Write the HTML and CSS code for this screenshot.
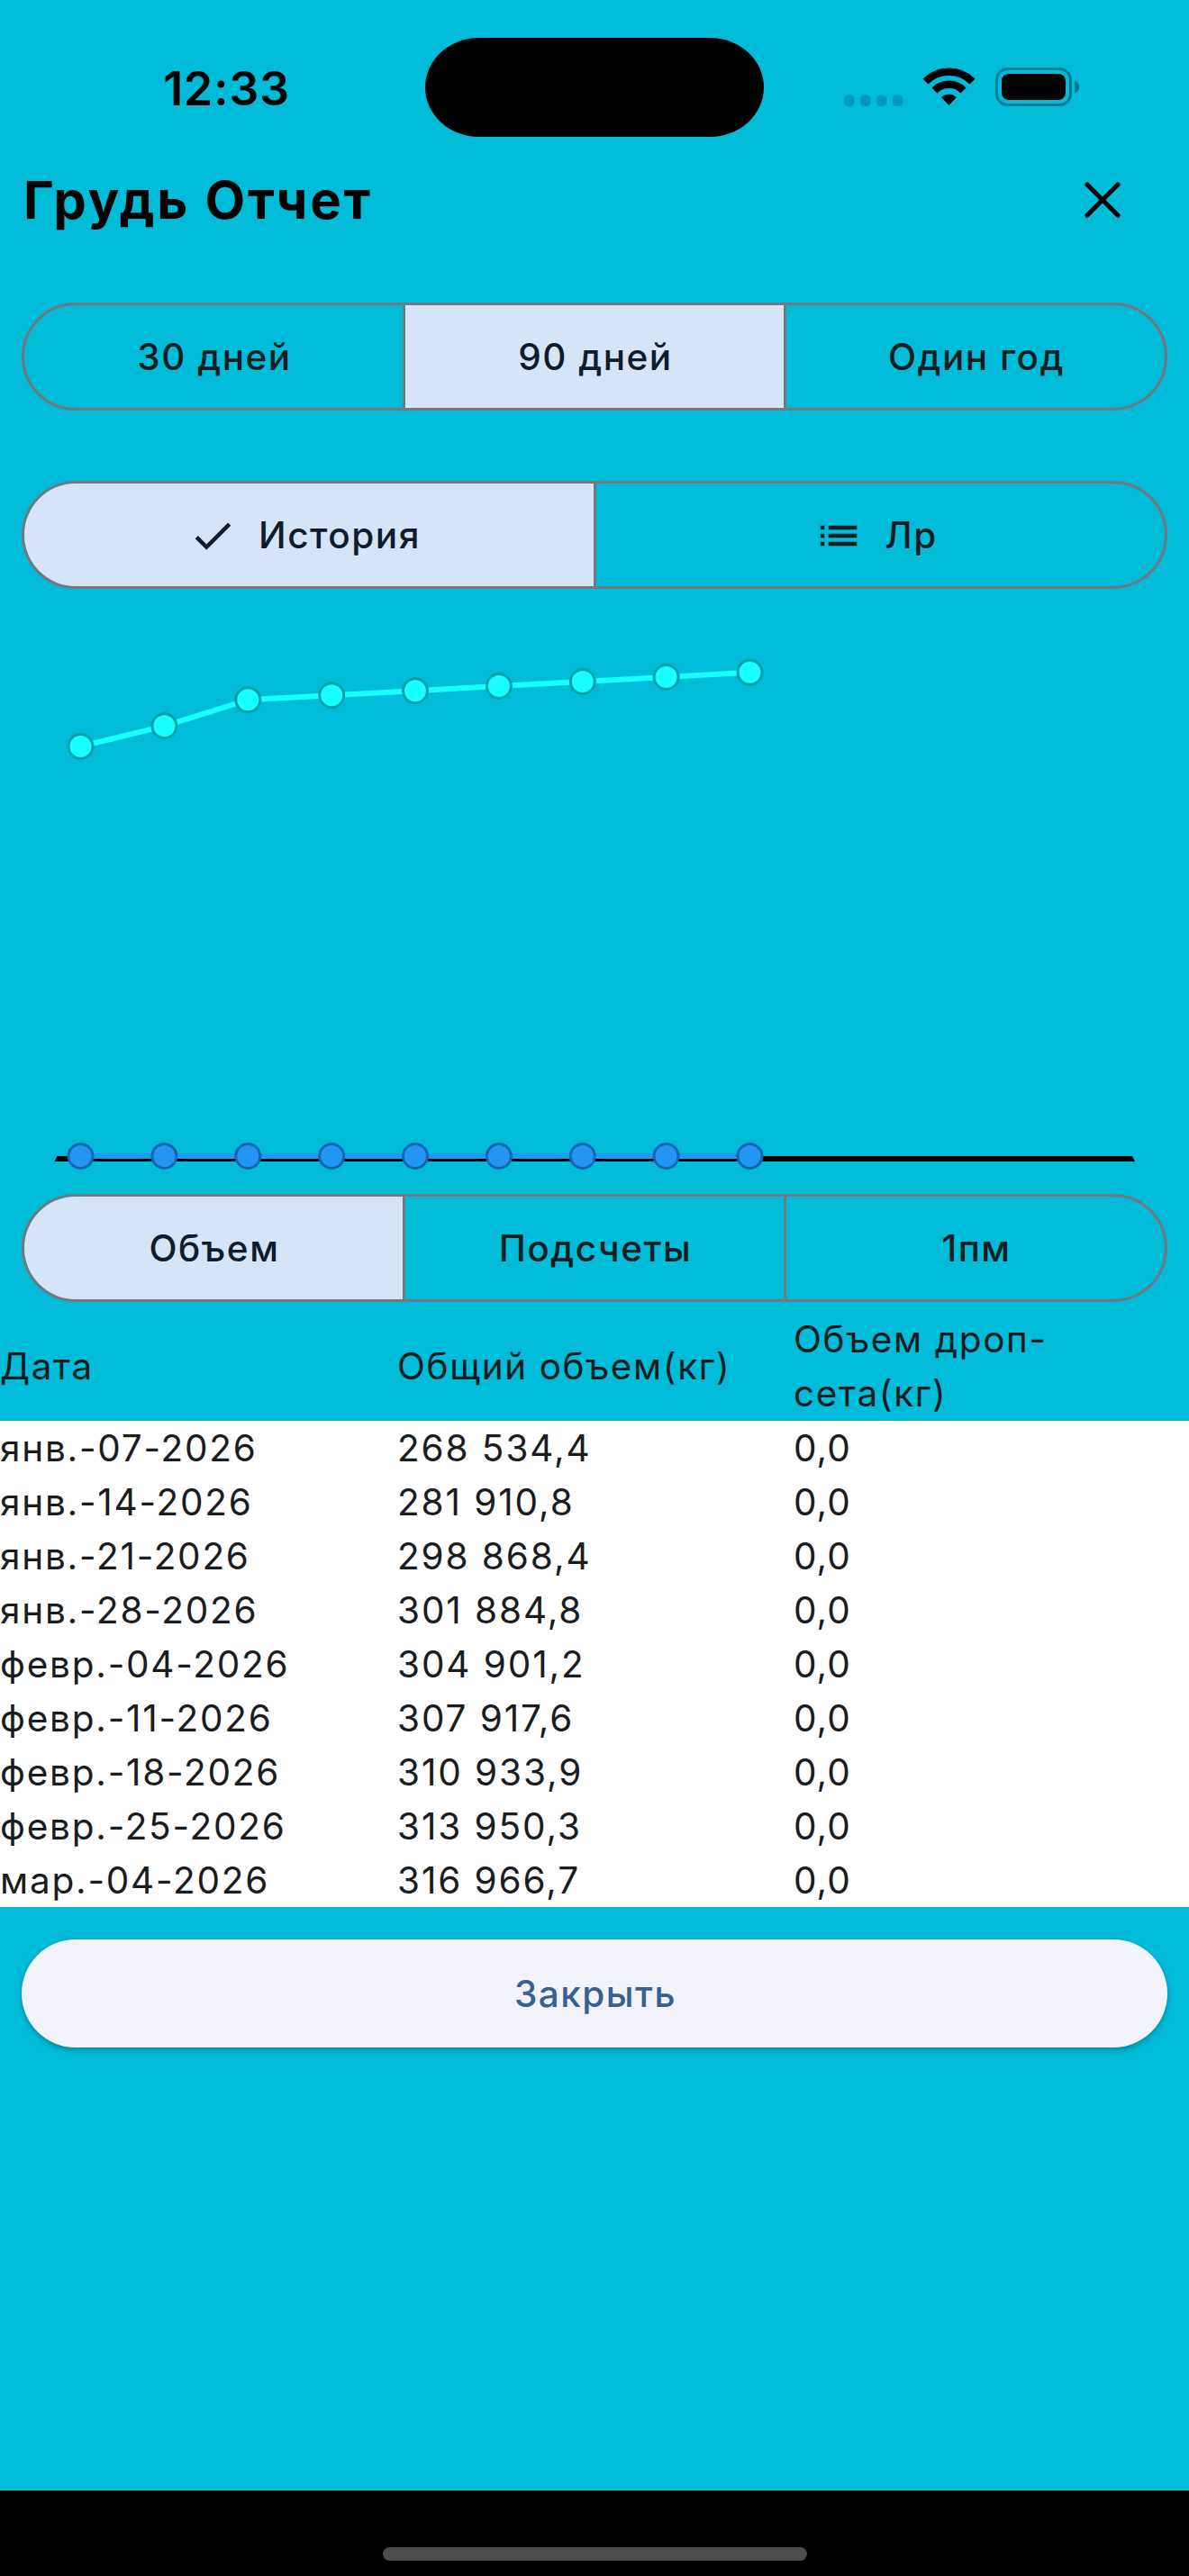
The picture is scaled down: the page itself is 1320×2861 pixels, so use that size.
FILE: index.html
```html
<!DOCTYPE html>
<html lang="ru">
<head>
<meta charset="utf-8">
<title>Грудь Отчет</title>
<link rel="stylesheet" href="styles.css">
</head>
<body>
<div class="screen">
  <header class="status">
    <div class="clock">12:33</div>
    <div class="island"></div>
    <svg class="indicators" width="270" height="50" viewBox="0 0 270 50">
      <g fill="#0099b9">
        <rect x="7" y="35.500" width="11.500" height="12.500" rx="4.500"/>
        <rect x="25" y="35.500" width="11.500" height="12.500" rx="4.500"/>
        <rect x="43" y="35.500" width="11.500" height="12.500" rx="4.500"/>
        <rect x="61" y="35.500" width="11.500" height="12.500" rx="4.500"/>
      </g>
      <g fill="none" stroke="#000">
        <path d="M97.500 20.500A37 37 0 0 1 149.500 20.500" stroke-width="8.500"/>
        <path d="M107.500 30.500A22.500 22.500 0 0 1 139.500 30.500" stroke-width="8.500"/>
      </g>
      <path d="M123.500 47L115 38A12.500 12.500 0 0 1 132 38Z" fill="#000"/>
      <rect x="176.500" y="6.500" width="82" height="40" rx="12.500" fill="none" stroke="#007a8f" stroke-width="3"/>
      <rect x="182" y="12" width="71" height="29" rx="8" fill="#000"/>
      <path d="M263 19.500c2.700 .8 5 3.800 5 7.200s-2.300 6.400-5 7.200z" fill="#007a8f"/>
    </svg>
  </header>

  <div class="titlebar">
    <h1 class="title">Грудь Отчет</h1>
    <svg class="close" width="44" height="44" viewBox="0 0 44 44"><path d="M4.800 4.800L39.200 39.200M39.200 4.800L4.800 39.200" stroke="#000" stroke-width="5" stroke-linecap="round"/></svg>
  </div>

  <div class="segmented period">
    <div class="segment">30 дней</div>
    <div class="segment selected">90 дней</div>
    <div class="segment">Один год</div>
  </div>

  <div class="segmented view">
    <div class="segment with-icon selected">
      <svg width="54" height="54" viewBox="0 0 24 24"><path d="M9 16.170L4.830 12l-1.420 1.410L9 19 21 7l-1.410-1.410z" fill="currentColor"/></svg>
      <span>История</span>
    </div>
    <div class="segment with-icon">
      <svg width="54" height="54" viewBox="0 0 24 24"><path d="M3 13h2v-2H3v2zm0 4h2v-2H3v2zm0-8h2V7H3v2zm4 4h14v-2H7v2zm0 4h14v-2H7v2zM7 7v2h14V7H7z" fill="currentColor"/></svg>
      <span>Лр</span>
    </div>
  </div>

  <svg class="chart" width="1320" height="672" viewBox="0 654 1320 672">
    <path d="M60.500 1290L63.500 1284H1257L1260 1290Z" fill="#000"/>
    <path d="M89.500 1284H832.500" stroke="#2196f3" stroke-width="6"/>
    <g fill="#2196f3" stroke="#1564b4" stroke-width="3">
      <circle cx="89.500" cy="1284" r="13.500"/><circle cx="182.400" cy="1284" r="13.500"/><circle cx="275.300" cy="1284" r="13.500"/>
      <circle cx="368.200" cy="1284" r="13.500"/><circle cx="461" cy="1284" r="13.500"/><circle cx="553.900" cy="1284" r="13.500"/>
      <circle cx="646.800" cy="1284" r="13.500"/><circle cx="739.600" cy="1284" r="13.500"/><circle cx="832.500" cy="1284" r="13.500"/>
    </g>
    <path d="M89.500 829L182.400 806.300L275.300 777.300L368.200 772.200L461 767.200L553.900 762L646.800 757L739.600 752L832.500 746.800" fill="none" stroke="#18ffff" stroke-width="6"/>
    <g fill="#18ffff" stroke="#009fa8" stroke-width="3">
      <circle cx="89.500" cy="829" r="13.500"/><circle cx="182.400" cy="806.300" r="13.500"/><circle cx="275.300" cy="777.300" r="13.500"/>
      <circle cx="368.200" cy="772.200" r="13.500"/><circle cx="461" cy="767.200" r="13.500"/><circle cx="553.900" cy="762" r="13.500"/>
      <circle cx="646.800" cy="757" r="13.500"/><circle cx="739.600" cy="752" r="13.500"/><circle cx="832.500" cy="746.800" r="13.500"/>
    </g>
  </svg>

  <div class="segmented">
    <div class="segment selected">Объем</div>
    <div class="segment">Подсчеты</div>
    <div class="segment">1пм</div>
  </div>

  <table class="report">
    <thead>
      <tr><th>Дата</th><th>Общий объем(кг)</th><th>Объем дроп-<br>сета(кг)</th></tr>
    </thead>
    <tbody>
      <tr><td>янв.-07-2026</td><td>268 534,4</td><td>0,0</td></tr>
      <tr><td>янв.-14-2026</td><td>281 910,8</td><td>0,0</td></tr>
      <tr><td>янв.-21-2026</td><td>298 868,4</td><td>0,0</td></tr>
      <tr><td>янв.-28-2026</td><td>301 884,8</td><td>0,0</td></tr>
      <tr><td>февр.-04-2026</td><td>304 901,2</td><td>0,0</td></tr>
      <tr><td>февр.-11-2026</td><td>307 917,6</td><td>0,0</td></tr>
      <tr><td>февр.-18-2026</td><td>310 933,9</td><td>0,0</td></tr>
      <tr><td>февр.-25-2026</td><td>313 950,3</td><td>0,0</td></tr>
      <tr><td>мар.-04-2026</td><td>316 966,7</td><td>0,0</td></tr>
    </tbody>
  </table>

  <button class="dismiss" type="button">Закрыть</button>

  <footer class="home"><div class="home-bar"></div></footer>
</div>
</body>
</html>
```

FILE: styles.css
```css
* {
  box-sizing: border-box;
}

body {
  margin: 0;
  font-family: Inter, "Liberation Sans", sans-serif;
}

.screen {
  display: flex;
  flex-direction: column;
  width: 1320px;
  height: 2861px;
  background: #00bcd9;
  color: #191c20;
}

.status {
  display: grid;
  grid-template-columns: 472px 376px 1fr;
  height: 176px;
  padding-top: 42px;
}

.clock {
  height: 114px;
  padding-left: 31px;
  font-size: 52px;
  font-weight: 600;
  line-height: 114px;
  letter-spacing: 0.7px;
  text-align: center;
  color: #000;
}

.island {
  height: 110px;
  border-radius: 60px / 55px;
  background: #000;
}

.indicators {
  margin: 28px 0 0 82px;
}

.titlebar {
  display: flex;
  align-items: center;
  justify-content: space-between;
  height: 91px;
  margin-bottom: 69px;
  padding: 1px 74px 0 26px;
  color: #000;
}

.title {
  margin: 0;
  font-size: 58px;
  font-weight: 650;
  line-height: 90px;
  letter-spacing: 2.75px;
}

.segmented {
  display: flex;
  flex: none;
  height: 120px;
  margin: 0 24px;
  overflow: hidden;
  border: 3px solid #73777f;
  border-radius: 60px;
}

.period {
  margin-bottom: 78px;
}

.segment {
  display: flex;
  flex: 1 1 0;
  align-items: center;
  justify-content: center;
  padding: 2px 0 0 2px;
  font-size: 40.5px;
  font-weight: 490;
  line-height: 60px;
  letter-spacing: 1.5px;
}

.segment:first-child {
  flex: 0 0 420px;
}

.view .segment:first-child {
  flex-basis: 632px;
}

.segment + .segment {
  border-left: 3px solid #73777f;
}

.with-icon {
  gap: 24px;
  padding-right: 12px;
}

.with-icon svg {
  margin-top: -1px;
}

.selected {
  background: #d6e4f7;
  color: #101c2b;
}

.chart {
  flex: none;
}

.report {
  width: 1320px;
  margin-top: 10px;
  border-collapse: collapse;
  table-layout: fixed;
  font-size: 40.5px;
  line-height: 58px;
  letter-spacing: 1.75px;
}

.report th,
.report td {
  padding: 2px 0 0;
  font-weight: 390;
  text-align: left;
  vertical-align: middle;
}

.report th {
  line-height: 60px;
  letter-spacing: 1.6px;
}

.report th + th,
.report td + td {
  padding-left: 1px;
}

.report tbody {
  background: #fff;
  color: #1a1c1e;
}

.report td:nth-child(2) {
  letter-spacing: 1.9px;
}

.report td:nth-child(3) {
  letter-spacing: 1px;
}

.dismiss {
  height: 120px;
  margin: 36px 24px 0;
  padding: 2px 0 0 2px;
  border: 0;
  border-radius: 60px;
  background: #f2f3fa;
  box-shadow: 0 3px 6px rgba(0, 0, 0, 0.28);
  font: 490 40.5px/60px Inter, "Liberation Sans", sans-serif;
  letter-spacing: 1.5px;
  color: #3a608f;
}

.home {
  display: flex;
  justify-content: center;
  height: 95px;
  margin-top: auto;
  padding-top: 63px;
  background: #000;
}

.home-bar {
  width: 471px;
  height: 15px;
  border-radius: 7.5px;
  background: #4d4d4d;
}
```
